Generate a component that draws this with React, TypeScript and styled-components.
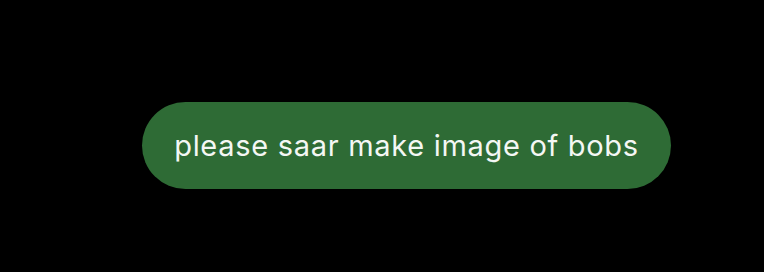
import React from "react";
import styled, { createGlobalStyle } from "styled-components";

const Global = createGlobalStyle`
  html, body { margin: 0; padding: 0; background: #000; }
  body { width: 764px; height: 272px; overflow: hidden; }
`;

const Page = styled.div`
  display: flex;
  align-items: flex-start;
  padding: 102px 0 0 142px;
  height: 272px;
  box-sizing: border-box;
  background: #000;
`;

const Bubble = styled.div`
  display: inline-flex;
  align-items: center;
  justify-content: center;
  width: 529px;
  height: 87px;
  box-sizing: border-box;
  border-radius: 44px;
  background: #2e6b35;
  color: #f4f7f4;
  font-family: Inter, "Noto Sans", sans-serif;
  font-size: 29px;
  letter-spacing: 0.7px;
  line-height: 1;
  white-space: nowrap;
`;

export default function App() {
  return (
    <>
      <Global />
      <Page>
        <Bubble>please saar make image of bobs</Bubble>
      </Page>
    </>
  );
}
